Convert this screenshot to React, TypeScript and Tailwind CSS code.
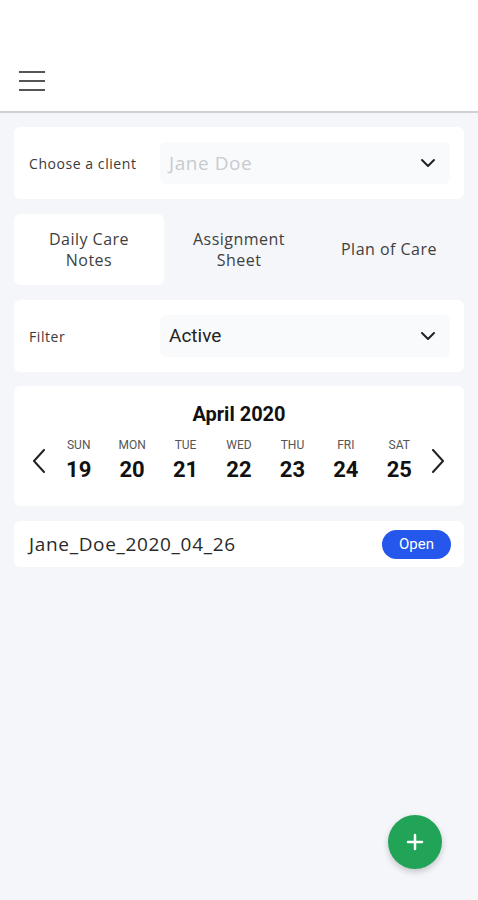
import { ChevronDown, Plus } from "lucide-react";

const muli = { fontFamily: "'Open Sans', 'Noto Sans', sans-serif" };
const roboto = { fontFamily: "Roboto, 'Noto Sans', sans-serif" };

const days = [
  { name: "SUN", num: 19 },
  { name: "MON", num: 20 },
  { name: "TUE", num: 21 },
  { name: "WED", num: 22 },
  { name: "THU", num: 23 },
  { name: "FRI", num: 24 },
  { name: "SAT", num: 25 },
];

function Arrow({ dir }: { dir: "left" | "right" }) {
  return (
    <svg width="14" height="24" viewBox="0 0 14 24" className="shrink-0 text-[#222]">
      <polyline
        points={dir === "left" ? "12,1 2,12 12,23" : "2,1 12,12 2,23"}
        fill="none"
        stroke="currentColor"
        strokeWidth="2"
        strokeLinecap="round"
        strokeLinejoin="round"
      />
    </svg>
  );
}

function SelectRow({ label, value, muted }: { label: string; value: string; muted?: boolean }) {
  return (
    <div className="flex h-[72px] items-center rounded-md bg-white pl-[15px] pr-[14px]">
      <span className="w-[131px] text-[14px] tracking-[0.04em] text-[#3a3a3a]" style={muli}>
        {label}
      </span>
      <div className="flex h-[42px] flex-1 items-center justify-between rounded-md bg-[#f9fafc] pl-[9px] pr-[10px]">
        <span
          className={
            muted ? "text-[19px] tracking-[0.03em] text-[#c9cbd0]" : "text-[19px] text-[#222]"
          }
          style={muted ? muli : roboto}
        >
          {value}
        </span>
        <ChevronDown className="size-6 text-[#222]" strokeWidth={2} />
      </div>
    </div>
  );
}

export default function App() {
  return (
    <div className="relative flex min-h-[900px] flex-col bg-[#f4f6fa]">
      <header className="flex h-[113px] items-end border-b-2 border-[#cfd1d4] bg-white pb-[19px] pl-[19px]">
        <svg width="26" height="22" viewBox="0 0 26 22" className="text-[#555]">
          <rect x="0" y="1" width="26" height="2" fill="currentColor" />
          <rect x="0" y="10" width="26" height="2" fill="currentColor" />
          <rect x="0" y="19" width="26" height="2" fill="currentColor" />
        </svg>
      </header>

      <main className="flex flex-col px-[14px] pt-[14px]">
        <SelectRow label="Choose a client" value="Jane Doe" muted />

        <div
          className="mt-[15px] grid h-[71px] grid-cols-3 text-center text-[16px] leading-[21px] tracking-[0.03em] text-[#404040]"
          style={muli}
        >
          <div className="flex items-center justify-center rounded-md bg-white">
            Daily Care
            <br />
            Notes
          </div>
          <div className="flex items-center justify-center">
            Assignment
            <br />
            Sheet
          </div>
          <div className="flex items-center justify-center">Plan of Care</div>
        </div>

        <div className="mt-[15px]">
          <SelectRow label="Filter" value="Active" />
        </div>

        <div className="mt-[14px] flex h-[120px] flex-col items-center rounded-md bg-white pt-[15px]">
          <div className="text-[20px] font-bold leading-[26px] text-[#111]" style={roboto}>
            April 2020
          </div>
          <div className="mt-[10px] flex w-full items-center pl-[12px]">
            <div className="flex w-[26px] shrink-0 justify-center">
              <Arrow dir="left" />
            </div>
            <div className="grid w-[374px] grid-cols-7 text-center" style={roboto}>
              {days.map((d) => (
                <div key={d.name} className="flex flex-col items-center">
                  <span className="text-[12px] leading-[16px] text-[#555]">{d.name}</span>
                  <span className="mt-[3px] text-[22px] font-bold leading-[28px] text-[#111]">
                    {d.num}
                  </span>
                </div>
              ))}
            </div>
            <div className="flex w-[24px] shrink-0 justify-center">
              <Arrow dir="right" />
            </div>
          </div>
        </div>

        <div className="mt-[15px] flex h-[46px] items-center justify-between rounded-md bg-white pl-[15px] pr-[13px]">
          <span className="text-[19px] tracking-[0.035em] text-[#2a2a2a]" style={muli}>
            Jane_Doe_2020_04_26
          </span>
          <button
            className="flex h-[29px] w-[69px] items-center justify-center rounded-full bg-[#2557ec] text-[15px] text-white"
            style={roboto}
          >
            Open
          </button>
        </div>
      </main>

      <button className="absolute left-[388px] top-[815px] flex size-[54px] items-center justify-center rounded-full bg-[#21a457] text-white shadow-[0_3px_6px_rgba(0,0,0,0.2)]">
        <Plus className="size-6" strokeWidth={2.5} />
      </button>
    </div>
  );
}
